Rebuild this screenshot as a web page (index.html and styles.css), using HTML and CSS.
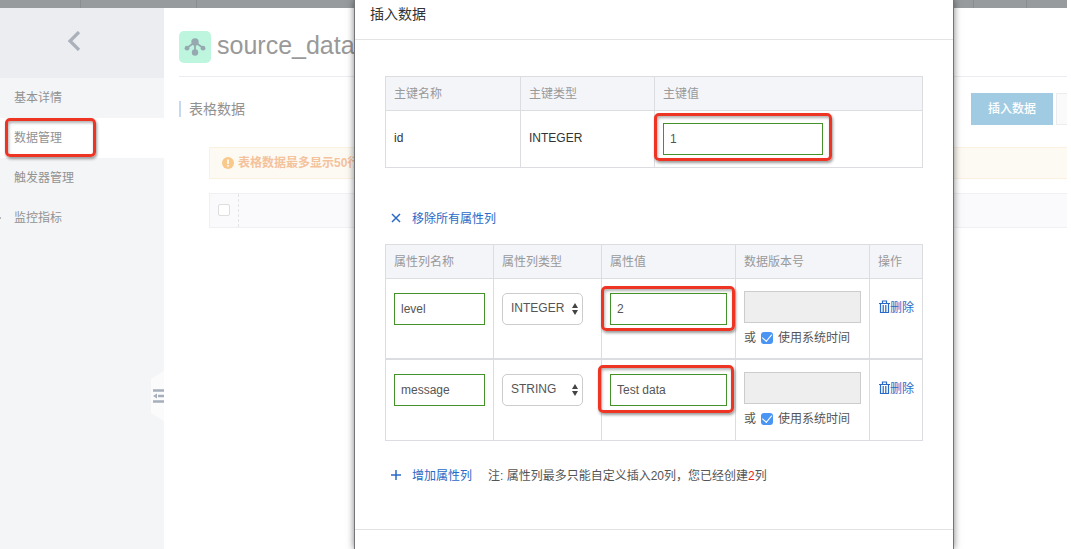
FILE: index.html
```html
<!DOCTYPE html>
<html lang="zh-CN">
<head>
<meta charset="utf-8">
<title>插入数据</title>
<link rel="stylesheet" href="styles.css">
</head>
<body>
<div class="page">
  <header class="topbar"><span class="tab tab-first"></span><span class="tab tab-second"></span><span class="tab tab-fill"></span><span class="tab tab-small"></span><span class="tab-end"></span></header>
  <div class="shell">
    <aside class="sidebar">
      <button class="back" type="button" aria-label="返回">
        <svg width="14" height="20" viewBox="0 0 14 20"><path d="M12 1 3 10l9 9" fill="none" stroke="#aab1ba" stroke-width="3.200"/></svg>
      </button>
      <nav class="menu">
        <a class="item" href="#">基本详情</a>
        <a class="item active" href="#">数据管理<span class="mark mark-nav"></span></a>
        <a class="item" href="#">触发器管理</a>
        <a class="item expandable" href="#">监控指标</a>
      </nav>
      <button class="fold" type="button" aria-label="收起">
        <svg width="13" height="50" viewBox="0 0 13 50"><path d="M0 8 13 0v50L0 42z" fill="#fbfbfc"/><path d="M2 19.500h11M7 25h6M2 30.500h11" stroke="#a7aeba" stroke-width="2.400"/><path d="M6 22.500v5L2 25z" fill="#a7aeba"/></svg>
      </button>
    </aside>
    <main class="main">
      <div class="title-row">
        <svg class="logo" width="32" height="32" viewBox="0 0 32 32"><rect width="32" height="32" rx="5" fill="#bdf5de"/><g fill="#97a9b0"><path d="M16 11 8 17M16 11l8 6M16 11v10" fill="none" stroke="#97a9b0" stroke-width="1.800"/><circle cx="16" cy="11" r="3.700"/><circle cx="8" cy="17.200" r="2.400"/><circle cx="24" cy="17.200" r="2.400"/><circle cx="16" cy="21.500" r="3.200"/></g></svg>
        <h1 class="title">source_data</h1>
      </div>
      <div class="toolbar">
        <h2 class="section-title">表格数据</h2>
        <button class="btn primary" type="button">插入数据</button>
        <button class="btn plain" type="button" aria-label="更多"></button>
      </div>
      <div class="notice">
        <svg width="12" height="12" viewBox="0 0 12 12"><circle cx="6" cy="6" r="6" fill="#f9c98c"/><path d="M6 2.500v4.500M6 8v1.600" stroke="#fff" stroke-width="1.600"/></svg>
        <span>表格数据最多显示50行</span>
      </div>
      <div class="grid-head"><div class="pick"><input class="pick-box" type="checkbox" aria-label="全选"></div></div>
    </main>
  </div>
</div>

<div class="overlay">
  <section class="dialog" role="dialog" aria-labelledby="dialog-title">
    <h2 class="dialog-title" id="dialog-title">插入数据</h2>
    <div class="dialog-body">
      <table class="table">
        <colgroup><col class="key-name"><col class="key-type"><col></colgroup>
        <thead><tr><th>主键名称</th><th>主键类型</th><th>主键值</th></tr></thead>
        <tbody><tr class="key-row"><td class="text">id</td><td class="text">INTEGER</td>
          <td><div class="field key-field"><input class="input" type="text" value="1" aria-label="主键值"><span class="mark mark-key"></span></div></td></tr></tbody>
      </table>

      <div class="action-row remove-row">
        <button class="link" type="button"><svg width="12" height="12" viewBox="0 0 12 12"><path d="m2 1 8 8M10 1l-8 8" stroke="#2a69c6" stroke-width="1.500"/></svg>移除所有属性列</button>
      </div>

      <table class="table">
        <colgroup><col class="attr-name"><col class="attr-type"><col class="attr-value"><col class="attr-version"><col></colgroup>
        <thead><tr><th>属性列名称</th><th>属性列类型</th><th>属性值</th><th>数据版本号</th><th>操作</th></tr></thead>
        <tbody>
          <tr class="attr-row">
            <td><input class="input" type="text" value="level" aria-label="属性列名称"></td>
            <td><div class="field type-field"><select class="select" aria-label="属性列类型"><option>INTEGER</option><option>STRING</option></select><svg class="arrows" width="6" height="12" viewBox="0 0 6 12"><path d="M0 5 3 0l3 5zM0 7h6l-3 5z" fill="#444"/></svg></div></td>
            <td><div class="field"><input class="input" type="text" value="2" aria-label="属性值"><span class="mark mark-level"></span></div></td>
            <td class="version"><input class="input" type="text" disabled aria-label="数据版本号"><label class="check-label">或 <input class="check" type="checkbox" checked> 使用系统时间</label></td>
            <td class="operate"><button class="link delete" type="button"><svg width="12" height="14" viewBox="0 0 12 14"><path d="M1 3.500h11M4.500 3V1h4v2M2.500 3.500v9h8v-9M5.200 5v7M7.800 5v7" fill="none" stroke="#2a69c6" stroke-width="1.200"/></svg>删除</button></td>
          </tr>
          <tr class="attr-row">
            <td><input class="input" type="text" value="message" aria-label="属性列名称"></td>
            <td><div class="field type-field"><select class="select" aria-label="属性列类型"><option>STRING</option><option>INTEGER</option></select><svg class="arrows" width="6" height="12" viewBox="0 0 6 12"><path d="M0 5 3 0l3 5zM0 7h6l-3 5z" fill="#444"/></svg></div></td>
            <td><div class="field"><input class="input" type="text" value="Test data" aria-label="属性值"><span class="mark mark-message"></span></div></td>
            <td class="version"><input class="input" type="text" disabled aria-label="数据版本号"><label class="check-label">或 <input class="check" type="checkbox" checked> 使用系统时间</label></td>
            <td class="operate"><button class="link delete" type="button"><svg width="12" height="14" viewBox="0 0 12 14"><path d="M1 3.500h11M4.500 3V1h4v2M2.500 3.500v9h8v-9M5.200 5v7M7.800 5v7" fill="none" stroke="#2a69c6" stroke-width="1.200"/></svg>删除</button></td>
          </tr>
        </tbody>
      </table>

      <div class="action-row add-row">
        <button class="link" type="button"><svg width="12" height="12" viewBox="0 0 12 12"><path d="M6 0v10M1 5h10" stroke="#2a69c6" stroke-width="1.500"/></svg>增加属性列</button>
        <span>注: 属性列最多只能自定义插入20列，您已经创建<em class="count">2</em>列</span>
      </div>
    </div>
    <footer class="dialog-footer"></footer>
  </section>
</div>
</body>
</html>
```

FILE: styles.css
```css
* { box-sizing: border-box; }

body {
  margin: 0;
  background: #fff;
  color: #555;
  font: 12px/20px "Liberation Sans", "Noto Sans CJK SC", sans-serif;
  overflow: hidden;
}

h1, h2 { margin: 0; font-weight: normal; }
button, input, select { font: inherit; color: inherit; }
button { margin: 0; padding: 0; border: 0; background: none; }
a { color: inherit; text-decoration: none; }
svg { display: block; flex: none; }

.page {
  display: flex;
  flex-direction: column;
  min-height: 100vh;
  margin-right: 4px;
  overflow: hidden;
}

.topbar { display: flex; height: 8px; background: #989b9d; }
.tab { border-right: 1px solid #8b8e90; }
.tab-first { width: 81px; }
.tab-second { width: 116px; }
.tab-fill { flex: 1; }
.tab-small { width: 53px; }
.tab-end { width: 40px; }

.shell { display: flex; flex: 1; }

.sidebar { position: relative; width: 164px; background: #f4f5f7; color: #929292; }
.back {
  display: flex;
  align-items: center;
  justify-content: center;
  width: 100%;
  height: 70px;
  padding: 0 16px 4px 0;
  background: #ebedf1;
}
.item { display: flex; align-items: center; position: relative; height: 40px; padding-left: 14px; }
.active { background: #fff; }
.expandable::before {
  content: "";
  position: absolute;
  left: -1px;
  border: 2px solid transparent;
  border-left-color: #777;
}
.fold { position: absolute; right: 0; top: 363px; }

.main { flex: 1; min-width: 0; padding: 0 0 0 15px; }
.title-row {
  display: flex;
  align-items: center;
  gap: 6px;
  height: 69px;
  padding-top: 9px;
  border-bottom: 1px solid #ebecef;
}
.title { padding-bottom: 4px; font-size: 25px; line-height: 32px; color: #999; }

.toolbar { display: flex; align-items: center; gap: 3px; padding-top: 16px; }
.section-title {
  flex: 1;
  padding-left: 8px;
  border-left: 2px solid #c5daee;
  color: #919191;
  font-size: 14px;
  line-height: 16px;
}
.btn { height: 32px; }
.primary { width: 82px; background: #a0cbe3; color: #fff; font-weight: 500; }
.plain { width: 60px; margin-right: -49px; border: 1px solid #ececee; background: #fafafb; }

.notice {
  display: flex;
  align-items: center;
  gap: 4px;
  height: 32px;
  margin: 22px 0 14px 30px;
  padding-left: 12px;
  border: 1px solid #fcf1e0;
  border-right: 0;
  background: #fdfaf3;
  color: #f4c29c;
  font-weight: bold;
}
.grid-head {
  display: flex;
  height: 35px;
  margin-left: 30px;
  border: 1px solid #eff0f4;
  border-right: 0;
  background: #fafafc;
}
.pick { display: flex; width: 29px; padding: 10px 8px; border-right: 1px dashed #e4e4e8; }
.pick-box {
  appearance: none;
  width: 12px;
  height: 12px;
  margin: 0;
  border: 1px solid #dedede;
  border-radius: 2px;
  background: #fff;
}

.overlay {
  position: absolute;
  inset: 0;
  display: flex;
  padding: 0 117px 0 354px;
  overflow: hidden;
}
.dialog {
  flex: 1;
  min-width: 0;
  border: solid #737578;
  border-width: 0 1px;
  background: #fff;
  box-shadow: 0 0 7px rgba(0, 0, 0, 0.5);
}
.dialog-title {
  height: 40px;
  padding: 4px 15px;
  border-bottom: 1px solid #e2e3e5;
  color: #333;
  font-size: 14px;
}
.dialog-body { padding: 36px 30px 43px; }
.dialog-footer { border-top: 1px solid #e2e3e5; }

.table {
  width: 100%;
  table-layout: fixed;
  border-spacing: 0;
  border: solid #dcdde1;
  border-width: 1px 0 0 1px;
}
.table th, .table td {
  padding: 0 8px;
  border: solid #dcdde1;
  border-width: 0 1px 1px 0;
  text-align: left;
}
.table th { height: 34px; background: #f4f5f9; color: #999; font-weight: normal; }
.table td { vertical-align: top; }
.key-name { width: 135px; }
.key-type { width: 134px; }
.attr-name, .attr-type { width: 108px; }
.attr-value, .attr-version { width: 134px; }
.key-row td { height: 57px; padding-top: 12px; }
.key-row .text { padding-top: 17px; color: #333; }
.attr-row td { height: 81px; padding-top: 14px; }
.attr-row:first-child td { border-bottom-width: 2px; }
.attr-row .version { padding-top: 12px; }
.attr-row .operate { padding-top: 19px; }

.field { position: relative; }
.key-field { width: 160px; }
.type-field { width: 81px; }
.input {
  display: block;
  width: 100%;
  height: 32px;
  padding: 0 6px;
  border: 1px solid #43932a;
  border-radius: 0;
  background: #fff;
  outline: 0;
}
.input:disabled { border-color: #ccc; background: #eee; }
.select {
  display: block;
  appearance: none;
  width: 100%;
  height: 32px;
  padding: 0 8px 2px;
  border: 1px solid #ccc;
  border-radius: 5px;
  background: #fff;
}
.arrows { position: absolute; right: 5px; top: 10px; pointer-events: none; }

.check-label { display: flex; align-items: center; gap: 5px; margin-top: 5px; white-space: nowrap; }
.check {
  appearance: none;
  display: grid;
  place-items: center;
  width: 12px;
  height: 12px;
  margin: 0;
  border-radius: 3px;
  background: #4a94f3;
}
.check::after {
  content: "";
  width: 5px;
  height: 8px;
  margin-bottom: 3px;
  border: solid #fff;
  border-width: 0 1px 1px 0;
  transform: rotate(40deg);
}

.action-row { display: flex; gap: 16px; }
.remove-row { margin: 41px 0 15px; padding-left: 5px; }
.add-row { margin-top: 25px; padding-left: 5px; }
.link { display: flex; align-items: center; gap: 10px; color: #2a69c6; white-space: nowrap; }
.delete { gap: 0; }
.delete svg { margin-bottom: 3px; }
.count { color: #e8291c; font-style: normal; }

.mark {
  position: absolute;
  border: 3px solid #ee3524;
  border-radius: 5px;
  box-shadow: 1px 2px 3px rgba(0, 0, 0, 0.4), inset 1px 2px 3px rgba(0, 0, 0, 0.3);
  pointer-events: none;
}
.mark-nav { inset: 0 68px 1px 5px; }
.mark-key { inset: -10px -9px -6px -9px; }
.mark-level { inset: -7px -8px -6px -9px; }
.mark-message { inset: -9px -7px -7px -12px; }
```
